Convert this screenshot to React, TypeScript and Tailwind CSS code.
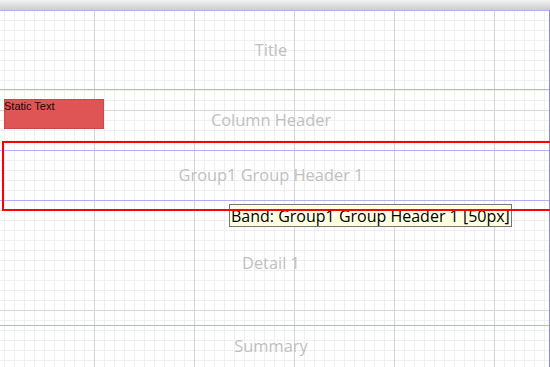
const bandLabel = 'text-[16.4px] text-[#bfbfbf] font-["Open_Sans",sans-serif]';

function Band({ height, label, last }: { height: string; label: string; last?: boolean }) {
  return (
    <div
      className={`${height} flex items-center justify-center pr-[7px] ${
        last ? '' : 'border-b border-[#b3b0f2]'
      }`}>
      <span className={bandLabel}>{label}</span>
    </div>
  );
}

export default function App() {
  return (
    <div className="relative w-[550px] h-[367px] overflow-hidden bg-white bg-[linear-gradient(to_right,#d6d6d6_1px,transparent_1px),linear-gradient(to_bottom,#d6d6d6_1px,transparent_1px),linear-gradient(to_right,#efefef_1px,transparent_1px),linear-gradient(to_bottom,#efefef_1px,transparent_1px)] bg-[size:100px_100px,100px_100px,10px_10px,10px_10px] bg-[position:-6px_0,0_10px,4px_0,0_0]">
      <div className="h-[10px] bg-gradient-to-b from-[#f2f2f2] to-[#cdcdcd]" />
      <div className="flex flex-col border-t border-r border-[#b3b0f2] border-r-[#958bd0] h-[357px]">
        <Band height="h-[79px]" label="Title" />
        <Band height="h-[61px]" label="Column Header" />
        <Band height="h-[50px]" label="Group1 Group Header 1" />
        <Band height="h-[125px]" label="Detail 1" />
        <Band height="flex-1" label="Summary" last />
      </div>

      <div className="absolute left-[4px] top-[99px] w-[100px] h-[30px] bg-[#df5454] border border-[#c94848]">
        <span className='block leading-[12px] text-[11px] text-[#1a0606] font-["Liberation_Sans",sans-serif] -ml-[1px]'>
          Static Text
        </span>
      </div>

      <div className='absolute left-[229px] top-[204px] w-[283px] h-[23px] bg-[#ffffe1] border border-[#767676] flex items-center pl-[1px] text-[16px] leading-none text-black font-["Open_Sans",sans-serif] whitespace-nowrap'>
        Band: Group1 Group Header 1 [50px]
      </div>

      <div className="absolute left-[2px] top-[141px] w-[560px] h-[70px] border-2 border-[#ff0000]" />
    </div>
  );
}
